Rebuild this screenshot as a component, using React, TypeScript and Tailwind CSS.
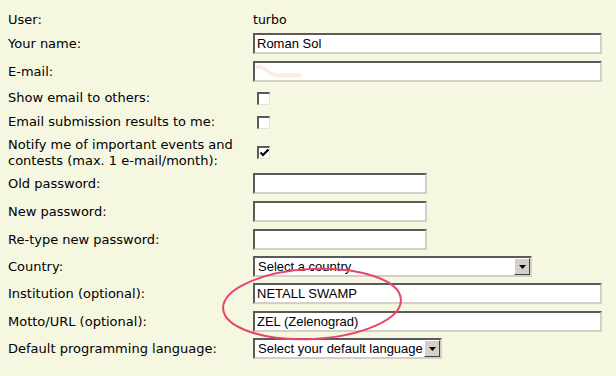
const label = "pl-[8px] w-[253px] shrink-0 text-[13px] leading-[16px] text-black font-['DejaVu_Sans',Verdana,sans-serif]";
const inset =
  "h-[21px] bg-white border-2 border-t-[#5a5a5a] border-l-[#5a5a5a] border-r-[#d4d0c8] border-b-[#d4d0c8] text-[13px] leading-[17px] pl-[2px] text-black font-['Liberation_Sans',Arial,sans-serif] flex items-center";

function TextBox({ value, width, children }: { value?: string; width: string; children?: React.ReactNode }) {
  return (
    <div className={`${inset} ${width} relative overflow-hidden`}>
      {value}
      {children}
    </div>
  );
}

function Check({ checked }: { checked?: boolean }) {
  return (
    <div className="ml-[4px] w-[13px] h-[13px] bg-white border-t-2 border-l-2 border-t-[#5a5a5a] border-l-[#5a5a5a] border-r border-b border-r-[#e4e2da] border-b-[#e4e2da] flex items-center justify-center">
      {checked && (
        <svg width="9" height="9" viewBox="0 0 9 9">
          <path d="M0.5 3.5 L3 6 L8.5 0.5" stroke="#000" strokeWidth="2.2" fill="none" />
        </svg>
      )}
    </div>
  );
}

function Select({ value, width }: { value: string; width: string }) {
  return (
    <div className={`${inset} ${width} pr-0 justify-between`}>
      <span className="pl-[1px] whitespace-nowrap">{value}</span>
      <div className="w-[16px] h-[17px] bg-[#d4d0c8] border border-t-white border-l-white border-r-[#404040] border-b-[#404040] flex items-center justify-center shrink-0">
        <svg width="7" height="4" viewBox="0 0 7 4">
          <path d="M0 0 H7 L3.5 4 Z" fill="#000" />
        </svg>
      </div>
    </div>
  );
}

function Row({ h, name, children }: { h: string; name: React.ReactNode; children?: React.ReactNode }) {
  return (
    <div className={`flex items-center ${h}`}>
      <div className={label}>{name}</div>
      {children}
    </div>
  );
}

export default function App() {
  return (
    <div className="relative w-[616px] h-[376px] bg-[#f5f7e1] pt-[9px] overflow-hidden">
      <Row h="h-[22px]" name="User:">
        <span className="text-[12.5px] text-black font-['DejaVu_Sans',Verdana,sans-serif]">turbo</span>
      </Row>
      <Row h="h-[25px]" name="Your name:">
        <TextBox value="Roman Sol" width="w-[349px]" />
      </Row>
      <Row h="h-[31px]" name="E-mail:">
        <TextBox width="w-[349px]">
          <svg className="absolute left-0 top-0" width="60" height="20" viewBox="0 0 60 20">
            <path d="M2 4 C6 3 10 6 14 9 C18 12 22 14 28 12 C32 11 36 13 44 12" stroke="#fdeae0" strokeWidth="4" fill="none" strokeLinecap="round" />
          </svg>
        </TextBox>
      </Row>
      <Row h="h-[22px]" name="Show email to others:">
        <Check />
      </Row>
      <Row h="h-[26px]" name="Email submission results to me:">
        <Check />
      </Row>
      <Row
        h="h-[35px]"
        name={
          <>
            Notify me of important events and
            <br />
            contests (max. 1 e-mail/month):
          </>
        }
      >
        <Check checked />
      </Row>
      <Row h="h-[27px]" name="Old password:">
        <TextBox width="w-[174px]" />
      </Row>
      <Row h="h-[29px]" name="New password:">
        <TextBox width="w-[174px]" />
      </Row>
      <Row h="h-[27px]" name="Re-type new password:">
        <TextBox width="w-[174px]" />
      </Row>
      <Row h="h-[27px]" name="Country:">
        <Select value="Select a country" width="w-[279px]" />
      </Row>
      <Row h="h-[27px]" name="Institution (optional):">
        <TextBox value="NETALL SWAMP" width="w-[349px]" />
      </Row>
      <Row h="h-[29px]" name="Motto/URL (optional):">
        <TextBox value="ZEL (Zelenograd)" width="w-[349px]" />
      </Row>
      <Row h="h-[25px]" name="Default programming language:">
        <Select value="Select your default language" width="w-[189px]" />
      </Row>

      {/* hand-drawn highlight */}
      <svg className="absolute left-0 top-0 pointer-events-none" width="616" height="376">
        <ellipse cx="312" cy="304" rx="89" ry="35" transform="rotate(-3 312 304)" fill="none" stroke="#e8456b" strokeWidth="2" />
      </svg>
    </div>
  );
}
